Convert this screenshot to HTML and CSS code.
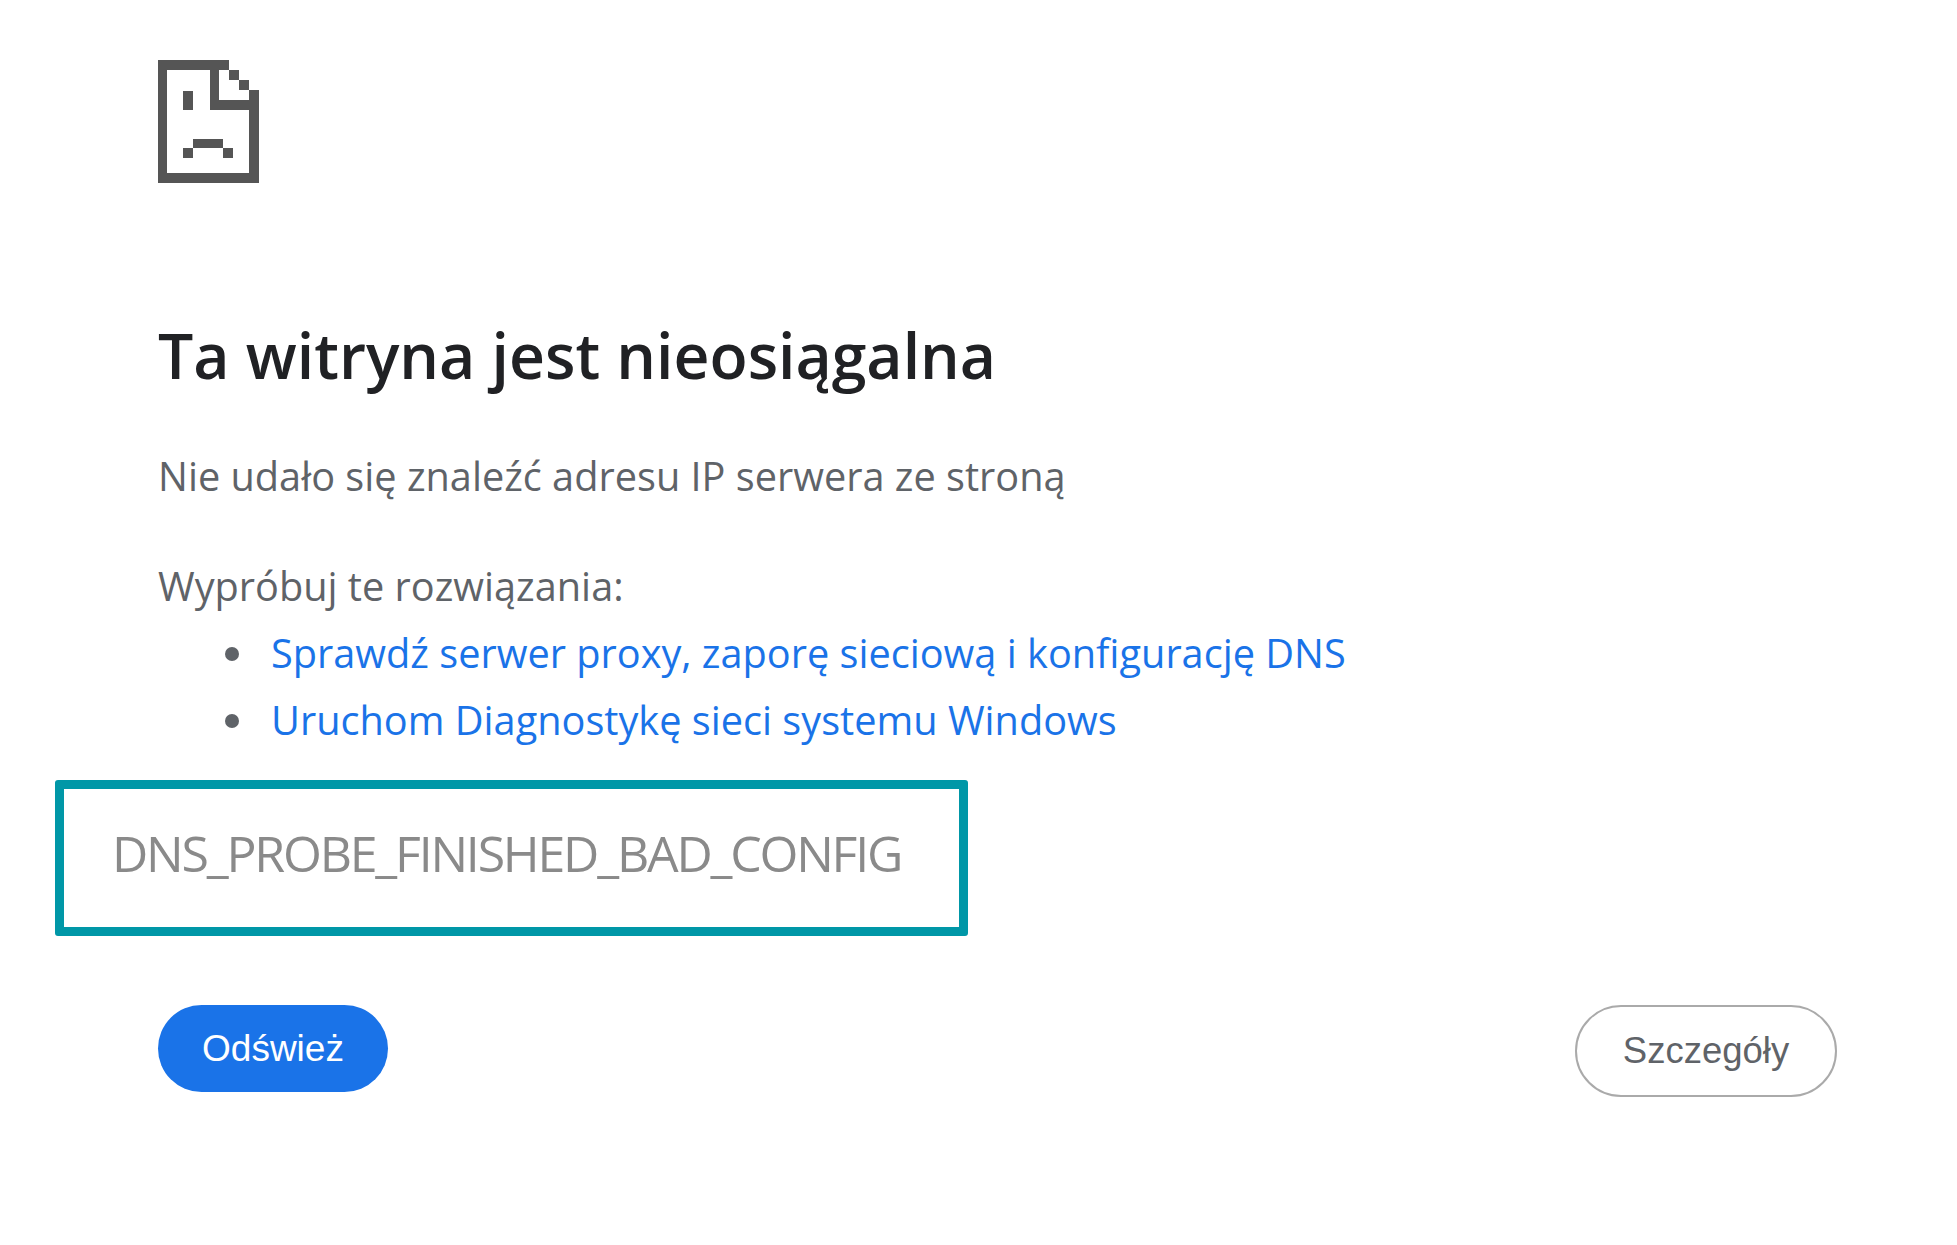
FILE: index.html
```html
<!DOCTYPE html>
<html lang="pl">
<head>
  <meta charset="utf-8">
  <title>Ta witryna jest nieosiągalna</title>
  <link rel="stylesheet" href="styles.css">
</head>
<body>
  <div class="page">
    <svg class="sad-icon" viewBox="0 0 101 123" width="101" height="123" fill="#555">
      <path fill-rule="evenodd" d="M0 0H71V10H81V20H91V30H101V123H0ZM9 10V113H91V50H52V10ZM61 10V40H91V30H81V20H71V10Z"/>
      <rect x="25" y="31" width="10" height="19"/>
      <rect x="35" y="79" width="30" height="9"/>
      <rect x="25" y="88" width="10" height="10"/>
      <rect x="65" y="88" width="10" height="10"/>
    </svg>

    <h1 class="title">Ta witryna jest nieosiągalna</h1>
    <p class="subtitle">Nie udało się znaleźć adresu IP serwera ze stroną</p>

    <p class="try">Wypróbuj te rozwiązania:</p>
    <ul class="fixes">
      <li><a href="#">Sprawdź serwer proxy, zaporę sieciową i konfigurację DNS</a></li>
      <li><a href="#">Uruchom Diagnostykę sieci systemu Windows</a></li>
    </ul>

    <div class="code-box"><span class="code-text">DNS_PROBE_FINISHED_BAD_CONFIG</span></div>

    <div class="buttons">
      <button class="btn-reload">Odśwież</button>
      <button class="btn-details">Szczegóły</button>
    </div>
  </div>
</body>
</html>
```

FILE: styles.css
```css
html, body {
  margin: 0;
  background: #fff;
}

.page {
  box-sizing: border-box;
  width: 1957px;
  height: 1245px;
  padding: 60px 120px 0 158px;
  font-family: "Open Sans", "Noto Sans", sans-serif;
  color: #5f6368;
}

.sad-icon {
  display: block;
  filter: blur(0.5px);
}

.title {
  margin: 134px 0 0;
  font-size: 62.5px;
  line-height: 76px;
  font-weight: 600;
  color: #202124;
}

.subtitle {
  margin: 56px 0 0;
  font-size: 39.7px;
  line-height: 54px;
}

.try {
  margin: 56px 0 0;
  font-size: 39.7px;
  line-height: 54px;
}

.fixes {
  margin: 7px 0 0;
  padding: 0 0 0 67px;
  list-style: none;
  font-size: 39.7px;
  line-height: 67px;
}

.fixes li {
  display: flex;
  align-items: center;
  gap: 32px;
}

.fixes li::before {
  content: "";
  width: 14px;
  height: 14px;
  border-radius: 50%;
  background: #5f6368;
}

.fixes a {
  color: #1a73e8;
  text-decoration: none;
}

.code-box {
  box-sizing: border-box;
  width: 913px;
  height: 156px;
  margin: 26px 0 0 -103px;
  padding: 0 0 10px 48px;
  display: flex;
  align-items: center;
  border: 9px solid #0097a7;
  border-radius: 3px;
}

.code-text {
  font-size: 50px;
  letter-spacing: -2.2px;
  color: #8a8a8a;
  filter: blur(0.6px);
}

.buttons {
  margin-top: 69px;
  display: flex;
  justify-content: space-between;
  align-items: flex-start;
}

.btn-reload {
  width: 230px;
  height: 87px;
  border: none;
  border-radius: 44px;
  background: #1a73e8;
  color: #fff;
  font-family: "Liberation Sans", sans-serif;
  font-size: 37px;
}

.btn-details {
  width: 262px;
  height: 92px;
  background: #fff;
  border: 2px solid #aaa;
  border-radius: 46px;
  color: #5f6368;
  font-family: "Liberation Sans", sans-serif;
  font-size: 36.5px;
}
```
